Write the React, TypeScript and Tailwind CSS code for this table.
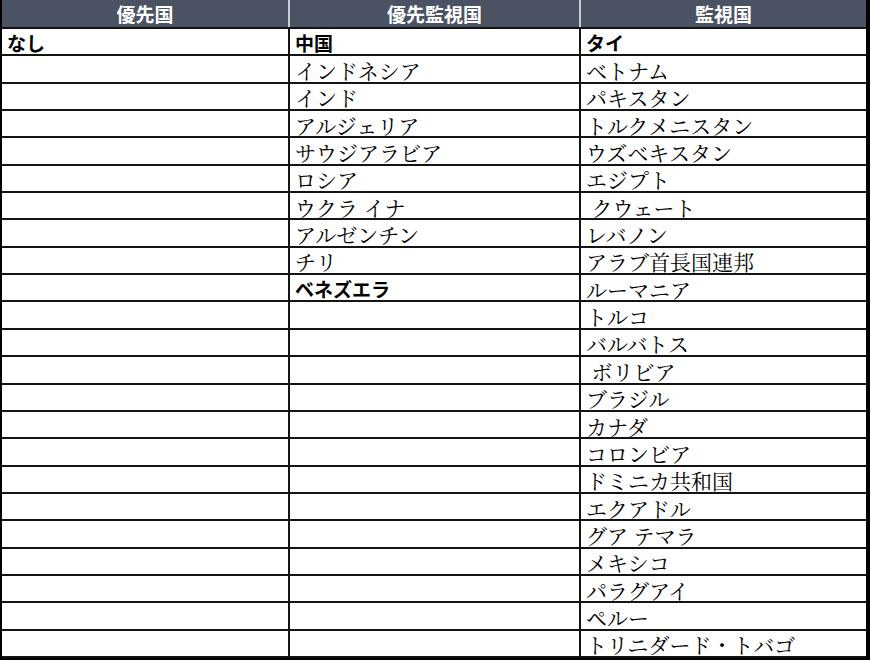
const priority = ['なし'];
const priorityWatch = [
  '中国',
  'インドネシア',
  'インド',
  'アルジェリア',
  'サウジアラビア',
  'ロシア',
  'ウクラ イナ',
  'アルゼンチン',
  'チリ',
  'ベネズエラ',
];
const watch = [
  'タイ',
  'ベトナム',
  'パキスタン',
  'トルクメニスタン',
  'ウズベキスタン',
  'エジプト',
  ' クウェート',
  'レバノン',
  'アラブ首長国連邦',
  'ルーマニア',
  'トルコ',
  'バルバトス',
  ' ボリビア',
  'ブラジル',
  'カナダ',
  'コロンビア',
  'ドミニカ共和国',
  'エクアドル',
  'グア テマラ',
  'メキシコ',
  'パラグアイ',
  'ペルー',
  'トリニダード・トバゴ',
];

// entries shown in bold gothic in the source sheet
const boldCells = new Set(['なし', '中国', 'ベネズエラ', 'タイ']);

function Cell({ text, last }: { text?: string; last?: boolean }) {
  const bold = text ? boldCells.has(text) : false;
  return (
    <div
      className={`flex min-h-0 items-center overflow-hidden whitespace-pre pl-[5px] pt-[2px] border-b-2 border-[#141414] ${
        last ? '' : 'border-r-2'
      } ${
        bold
          ? "font-['Noto_Sans_CJK_JP',sans-serif] font-bold text-[19px]"
          : "font-['Noto_Serif_CJK_JP','Liberation_Serif','Noto_Sans_CJK_JP',serif] text-[21px]"
      } text-black leading-[22px]`}
    >
      {text ?? ''}
    </div>
  );
}

export default function App() {
  const rows = Array.from({ length: 23 }, (_, i) => i);

  return (
    <div className="w-[870px] h-[660px] bg-white">
      <div className="flex flex-col w-full h-full border-l-2 border-r-4 border-black">
        {/* header */}
        <div className="grid shrink-0 grid-cols-[288px_291px_1fr] h-[29px] bg-[#4b5264] border-b-2 border-[#141414] font-['Noto_Sans_CJK_JP',sans-serif] font-bold text-[19px] leading-none text-white">
          <div className="flex items-center justify-center border-r-2 border-[#c9ccd3]">優先国</div>
          <div className="flex items-center justify-center border-r-2 border-[#c9ccd3]">優先監視国</div>
          <div className="flex items-center justify-center">監視国</div>
        </div>

        {/* body */}
        <div className="grid min-h-0 flex-1 grid-cols-[288px_291px_1fr] grid-rows-[repeat(23,minmax(0,1fr))]">
          {rows.map((i) => (
            <div key={i} className="contents">
              <Cell text={priority[i]} />
              <Cell text={priorityWatch[i]} />
              <Cell text={watch[i]} last />
            </div>
          ))}
        </div>
        <div className="h-[2px] shrink-0 bg-black" />
      </div>
    </div>
  );
}
